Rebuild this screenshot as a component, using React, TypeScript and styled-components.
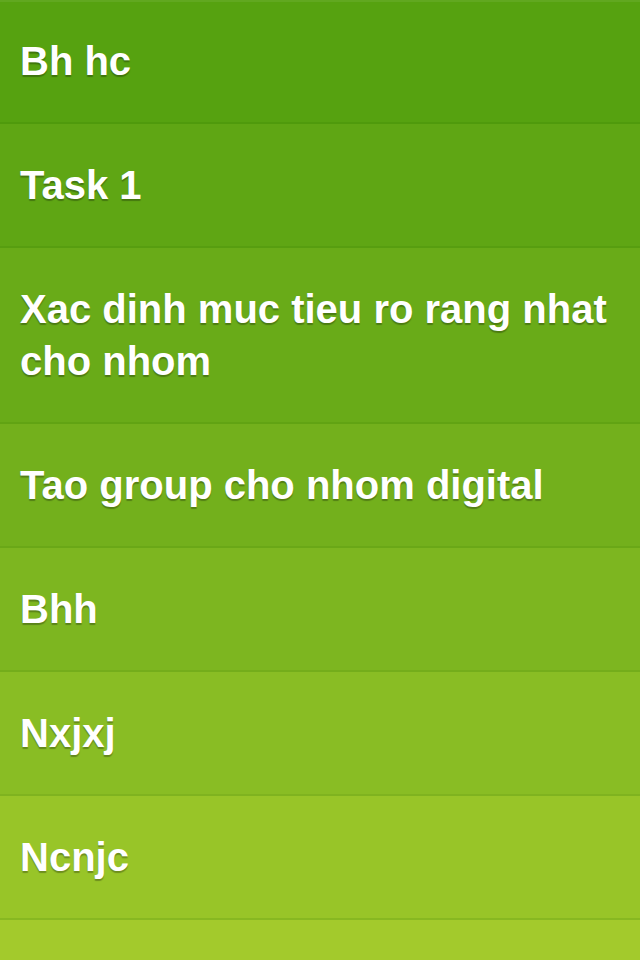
import React from "react";
import styled, { createGlobalStyle } from "styled-components";

const GlobalStyle = createGlobalStyle`
  html, body {
    margin: 0;
    padding: 0;
    background: #a5cb2d;
  }
  body {
    font-family: "Liberation Sans", Arial, Helvetica, sans-serif;
    -webkit-font-smoothing: antialiased;
  }
`;

const List = styled.ul`
  list-style: none;
  margin: 0;
  padding: 0;
  width: 640px;
  height: 960px;
  overflow: hidden;
`;

const Row = styled.li<{ $bg: string; $line: string; $first?: boolean }>`
  box-sizing: border-box;
  min-height: 124px;
  padding: 35px 20px 35px 20px;
  background: ${(p) => p.$bg};
  border-bottom: 2px solid ${(p) => p.$line};
  box-shadow: ${(p) => (p.$first ? "inset 0 2px 0 rgba(255,255,255,0.07)" : "none")};
  display: flex;
  align-items: flex-start;
`;

const Title = styled.span`
  color: #ffffff;
  font-size: 40px;
  font-weight: 700;
  line-height: 52px;
  letter-spacing: 0;
  text-shadow: 0 2px 1px rgba(0, 0, 0, 0.28);
`;

const items = [
  { text: "Bh hc", bg: "#56a210", line: "#4f9a0c" },
  { text: "Task 1", bg: "#5fa614", line: "#579e10" },
  { text: "Xac dinh muc tieu ro rang nhat cho nhom", bg: "#69ab18", line: "#61a313" },
  { text: "Tao group cho nhom digital", bg: "#73b01c", line: "#6aa817" },
  { text: "Bhh", bg: "#7db620", line: "#74ad1b" },
  { text: "Nxjxj", bg: "#89bd24", line: "#7fb31f" },
  { text: "Ncnjc", bg: "#98c528", line: "#87b821" },
  { text: "", bg: "#a3ca2c", line: "#96bf26" },
];

export default function App() {
  return (
    <>
      <GlobalStyle />
      <List>
        {items.map((it, i) => (
          <Row key={i} $bg={it.bg} $line={it.line} $first={i === 0}>
            <Title>{it.text}</Title>
          </Row>
        ))}
      </List>
    </>
  );
}
